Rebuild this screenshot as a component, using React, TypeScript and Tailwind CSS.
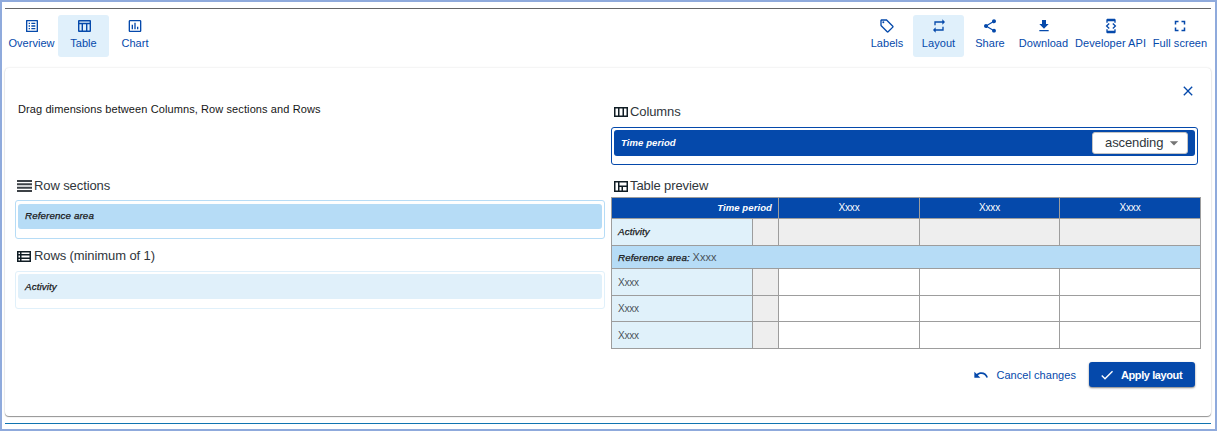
import React from "react";
import {
  MdOutlineListAlt,
  MdOutlineLocalOffer,
  MdRepeat,
  MdShare,
  MdGetApp,
  MdDeveloperMode,
  MdFullscreen,
  MdClose,
  MdUndo,
  MdCheck,
  MdArrowDropDown,
  MdInsertChartOutlined,
} from "react-icons/md";

function TableIcon() {
  return (
    <svg width="13" height="12" viewBox="0 0 13 12" className="ml-px">
      <path
        fillRule="evenodd"
        fill="currentColor"
        d="M1 0h11a1 1 0 0 1 1 1v10a1 1 0 0 1-1 1H1a1 1 0 0 1-1-1V1a1 1 0 0 1 1-1zM1.4 1.4v1.4h10.2V1.4zM1.4 4.2v6.4H3.6V4.2zM5 4.2v6.4h3V4.2zM9.4 4.2v6.4h2.2V4.2z"
      />
    </svg>
  );
}

function RowSectionsIcon() {
  return (
    <svg width="15" height="12" viewBox="0 0 15 12" className="shrink-0">
      <path fill="#3c4146" d="M0 0h15v2H0zM0 3.3h15v2H0zM0 6.7h15v2H0zM0 10h15v2H0z" />
    </svg>
  );
}

function RowsIcon() {
  return (
    <svg width="14" height="11" viewBox="0 0 14 11" className="mt-px shrink-0">
      <path
        fill="#101d24"
        fillRule="evenodd"
        d="M0 0h14v11H0zM1.5 1.5v1.6H3V1.5zM4.5 1.5v1.6h8V1.5zM1.5 4.6v1.8H3V4.6zM4.5 4.6v1.8h8V4.6zM1.5 7.9v1.6H3V7.9zM4.5 7.9v1.6h8V7.9z"
      />
    </svg>
  );
}

function ColumnsIcon() {
  return (
    <svg width="14" height="10" viewBox="0 0 14 10" className="shrink-0">
      <path fill="#101d24" fillRule="evenodd" d="M0 0h14v10H0zM1.5 1.5v7H4v-7zM5.5 1.5v7h3v-7zM10 1.5v7h2.5v-7z" />
    </svg>
  );
}

function PreviewIcon() {
  return (
    <svg width="14" height="11" viewBox="0 0 14 11" className="shrink-0">
      <path fill="#101d24" fillRule="evenodd" d="M0 0h14v11H0zM1.5 1.5v8H4v-8zM5.5 1.5v3h7v-3zM5.5 6v3.5h2V6zM9 6v3.5h3.5V6z" />
    </svg>
  );
}

function Tool({ icon, label, active, width }: { icon: React.ReactNode; label: string; active?: boolean; width: string }) {
  return (
    <button
      className={`flex h-[42px] shrink-0 flex-col items-center rounded-[3px] pt-[3px] text-[#0549ab] ${width} ${active ? "bg-[#e0f0fb]" : ""}`}
    >
      <span className="flex h-4 items-center justify-center">{icon}</span>
      <span className="mt-[3px] whitespace-nowrap text-[11px] leading-[13px] tracking-[0.05px]">{label}</span>
    </button>
  );
}

function Heading({ icon, label, gap }: { icon: React.ReactNode; label: string; gap: string }) {
  return (
    <div className={`flex h-[18px] items-center text-[13px] tracking-[-0.1px] text-[#30363b] ${gap}`}>
      {icon}
      <span className="leading-[18px]">{label}</span>
    </div>
  );
}

const cell = "border border-[#9d9d9d] p-0";
const boldDim = "text-[9.5px] font-bold italic tracking-[0.1px]";
const dim = "text-[9.8px] italic tracking-[0.1px] [-webkit-text-stroke:0.25px_#161616]";

export default function App() {
  return (
    <div className="h-[431px] w-[1217px] overflow-hidden border-2 border-[#8faadc] bg-white pl-[3px] pr-[4px] pt-[6px] font-['Liberation_Sans',Arial,sans-serif] text-[#161616]">
      <div className="h-px bg-[#666666]" />
      <div className="flex justify-between pt-[6px]">
        <div className="flex">
          <Tool width="w-[53px]" label="Overview" icon={<MdOutlineListAlt size={16} />} />
          <Tool width="w-[51px]" label="Table" active icon={<TableIcon />} />
          <Tool width="w-[52px]" label="Chart" icon={<MdInsertChartOutlined size={16} />} />
        </div>
        <div className="flex">
          <Tool width="w-[52px]" label="Labels" icon={<MdOutlineLocalOffer size={16} />} />
          <Tool width="w-[51px]" label="Layout" active icon={<MdRepeat size={16} />} />
          <Tool width="w-[52px]" label="Share" icon={<MdShare size={16} />} />
          <Tool width="w-[55px]" label="Download" icon={<MdGetApp size={16} />} />
          <Tool width="w-[79px]" label="Developer API" icon={<MdDeveloperMode size={16} />} />
          <Tool width="w-[60px]" label="Full screen" icon={<MdFullscreen size={18} />} />
          <span className="w-px" />
        </div>
      </div>

      <section className="mt-[11px] flex h-[348px] rounded-[4px] bg-white pl-[10px] pr-[10px] shadow-[0_1px_1px_rgba(0,0,0,0.4),0_0_2px_rgba(0,0,0,0.16)]">
        <div className="w-[590px]">
          <p className="ml-[3px] mt-[34px] h-[14px] text-[11px] leading-[14px] tracking-[0.1px]">
            Drag dimensions between Columns, Row sections and Rows
          </p>
          <div className="mt-[61px] pl-[2px]">
            <Heading gap="gap-[2px]" icon={<RowSectionsIcon />} label="Row sections" />
          </div>
          <div className="mt-[5px] h-[39px] rounded-[3px] border border-[#b6dcf6] p-[2px] pt-[3px]">
            <div className={`h-[25px] rounded-[3px] bg-[#b6dcf6] pl-[7px] leading-[24px] ${dim}`}>Reference area</div>
          </div>
          <div className="mt-[8px] pl-[2px]">
            <Heading gap="gap-[3px]" icon={<RowsIcon />} label="Rows (minimum of 1)" />
          </div>
          <div className="mt-[6px] h-[38px] rounded-[3px] border border-[#e0f0fa] p-[2px]">
            <div className={`h-[25px] rounded-[3px] bg-[#e0f0fa] pl-[7px] leading-[25px] ${dim}`}>Activity</div>
          </div>
        </div>

        <div className="ml-[6px] w-[590px]">
          <div className="flex h-[35px] items-end justify-end pr-[5px]">
            <MdClose size={16} className="mb-[4px] text-[#0549ab]" />
          </div>
          <div className="pl-[3px]">
            <Heading gap="gap-[2px]" icon={<ColumnsIcon />} label="Columns" />
          </div>
          <div className="mt-[6px] h-[38px] w-[587px] rounded-[3px] border border-[#0549ab] p-[2px]">
            <div className="flex h-[26px] items-center justify-between rounded-[3px] bg-[#0549ab] pl-[7px] pr-[7px]">
              <span className={`text-white ${boldDim}`}>Time period</span>
              <button className="flex h-[22px] w-[96px] items-center rounded-[3px] border border-[#c4c4c4] bg-white pl-[12px] text-[13px] tracking-[-0.1px] text-[#30363b]">
                <span className="w-[59px] text-left">ascending</span>
                <MdArrowDropDown size={20} className="shrink-0 text-[#757575]" />
              </button>
            </div>
          </div>
          <div className="mt-[12px] pl-[3px]">
            <Heading gap="gap-[2px]" icon={<PreviewIcon />} label="Table preview" />
          </div>
          <table className="mt-[2px] w-[590px] table-fixed border-collapse text-[10px]">
            <colgroup>
              <col className="w-[141px]" />
              <col className="w-[26px]" />
              <col className="w-[141px]" />
              <col className="w-[140px]" />
              <col className="w-[141px]" />
            </colgroup>
            <tbody>
              <tr className="h-[21px] bg-[#0549ab] text-white">
                <td colSpan={2} className={`${cell} pr-[6px]! text-right leading-[14px] ${boldDim}`}>Time period</td>
                {[0, 1, 2].map((i) => (
                  <td key={i} className={`${cell} text-center text-[10px] leading-[14px] tracking-[-0.2px]`}>Xxxx</td>
                ))}
              </tr>
              <tr className="h-[27px] bg-[#eeeeee]">
                <td className={`${cell} bg-[#e0f1fa] pl-[6px]! ${dim}`}>Activity</td>
                {[0, 1, 2, 3].map((i) => (
                  <td key={i} className={cell} />
                ))}
              </tr>
              <tr className="h-[23px] bg-[#b6dcf6]">
                <td colSpan={5} className={`${cell} pl-[6px]! leading-[16px]`}>
                  <span className={dim}>Reference area:</span>{" "}
                  <span className="text-[11px] text-[#4a5259]">Xxxx</span>
                </td>
              </tr>
              {["h-[27px]", "h-[26px]", "h-[27px]"].map((h, i) => (
                <tr key={i} className={h}>
                  <td className={`${cell} bg-[#e0f1fa] pl-[6px]! text-[10px] tracking-[-0.2px] text-[#4a5259]`}>Xxxx</td>
                  <td className={`${cell} bg-[#eeeeee]`} />
                  <td className={cell} />
                  <td className={cell} />
                  <td className={cell} />
                </tr>
              ))}
            </tbody>
          </table>
          <div className="mt-[13px] flex h-[25px] items-center justify-end pr-[6px] text-[11px]">
            <button className="mr-[13px] flex items-center gap-[7px] pt-px tracking-[0.05px] text-[#0549ab]">
              <MdUndo size={16} />
              Cancel changes
            </button>
            <button className="flex h-[25px] w-[106px] items-center gap-[6px] rounded-[3px] bg-[#0549ab] pl-[10px] font-bold text-white shadow-[0_1px_2px_rgba(0,0,0,0.5)]">
              <MdCheck size={16} />
              <span className="whitespace-nowrap pt-px tracking-[-0.4px]">Apply layout</span>
            </button>
          </div>
        </div>
      </section>
      <div className="mt-[7px] h-px bg-[#1074b0]" />
    </div>
  );
}
